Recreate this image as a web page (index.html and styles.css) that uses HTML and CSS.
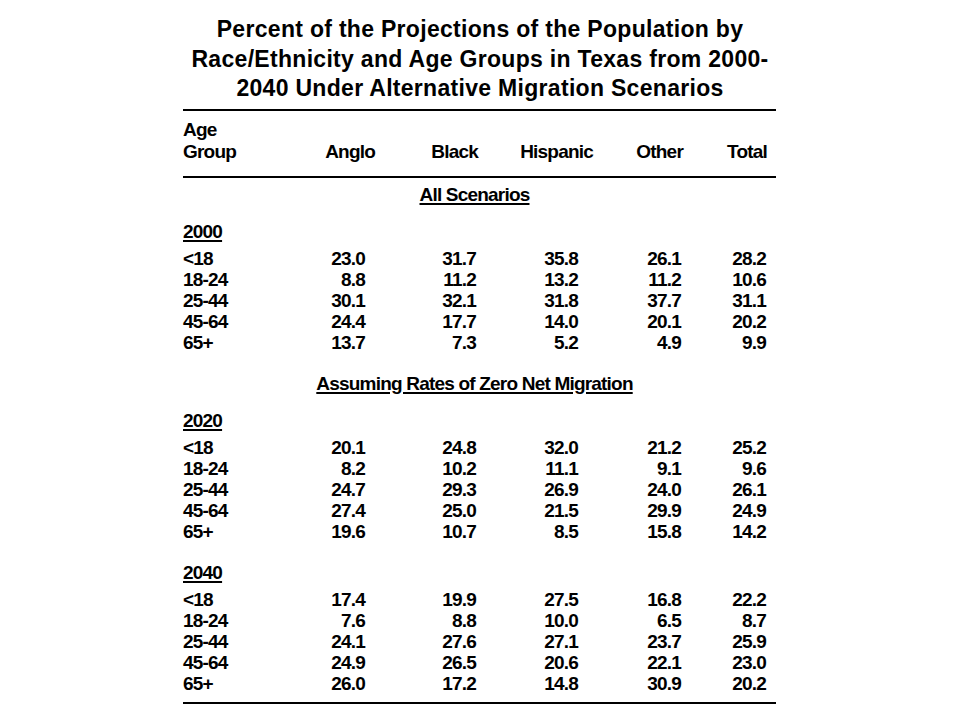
FILE: index.html
```html
<!DOCTYPE html>
<html>
<head>
<meta charset="utf-8">
<link rel="stylesheet" href="styles.css">
</head>
<body>
<div class="page">
  <h1 class="title">Percent of the Projections of the Population by<br>Race/Ethnicity and Age Groups in Texas from 2000-<br>2040 Under Alternative Migration Scenarios</h1>
  <div class="table">
    <div class="rule"></div>
    <div class="head">
      <div class="h-label">Age<br>Group</div>
      <div>Anglo</div>
      <div>Black</div>
      <div>Hispanic</div>
      <div>Other</div>
      <div>Total</div>
    </div>
    <div class="rule"></div>

    <div class="section first"><span>All Scenarios</span></div>
    <div class="year">2000</div>
    <div class="rows">
      <div class="row"><span>&lt;18</span><span>23.0</span><span>31.7</span><span>35.8</span><span>26.1</span><span>28.2</span></div>
      <div class="row"><span>18-24</span><span>8.8</span><span>11.2</span><span>13.2</span><span>11.2</span><span>10.6</span></div>
      <div class="row"><span>25-44</span><span>30.1</span><span>32.1</span><span>31.8</span><span>37.7</span><span>31.1</span></div>
      <div class="row"><span>45-64</span><span>24.4</span><span>17.7</span><span>14.0</span><span>20.1</span><span>20.2</span></div>
      <div class="row"><span>65+</span><span>13.7</span><span>7.3</span><span>5.2</span><span>4.9</span><span>9.9</span></div>
    </div>

    <div class="section"><span>Assuming Rates of Zero Net Migration</span></div>
    <div class="year">2020</div>
    <div class="rows">
      <div class="row"><span>&lt;18</span><span>20.1</span><span>24.8</span><span>32.0</span><span>21.2</span><span>25.2</span></div>
      <div class="row"><span>18-24</span><span>8.2</span><span>10.2</span><span>11.1</span><span>9.1</span><span>9.6</span></div>
      <div class="row"><span>25-44</span><span>24.7</span><span>29.3</span><span>26.9</span><span>24.0</span><span>26.1</span></div>
      <div class="row"><span>45-64</span><span>27.4</span><span>25.0</span><span>21.5</span><span>29.9</span><span>24.9</span></div>
      <div class="row"><span>65+</span><span>19.6</span><span>10.7</span><span>8.5</span><span>15.8</span><span>14.2</span></div>
    </div>

    <div class="year year-gap">2040</div>
    <div class="rows">
      <div class="row"><span>&lt;18</span><span>17.4</span><span>19.9</span><span>27.5</span><span>16.8</span><span>22.2</span></div>
      <div class="row"><span>18-24</span><span>7.6</span><span>8.8</span><span>10.0</span><span>6.5</span><span>8.7</span></div>
      <div class="row"><span>25-44</span><span>24.1</span><span>27.6</span><span>27.1</span><span>23.7</span><span>25.9</span></div>
      <div class="row"><span>45-64</span><span>24.9</span><span>26.5</span><span>20.6</span><span>22.1</span><span>23.0</span></div>
      <div class="row"><span>65+</span><span>26.0</span><span>17.2</span><span>14.8</span><span>30.9</span><span>20.2</span></div>
    </div>
    <div class="rule bottom"></div>
  </div>
</div>
</body>
</html>
```

FILE: styles.css
```css
html, body {
  margin: 0;
  padding: 0;
  background: #ffffff;
}

body {
  font-family: "Liberation Sans", Arial, sans-serif;
  color: #000000;
}

.page {
  width: 960px;
  height: 720px;
  padding-top: 15px;
  box-sizing: border-box;
}

.title {
  margin: 0;
  font-size: 23px;
  font-weight: bold;
  line-height: 29.5px;
  letter-spacing: 0.3px;
  text-align: center;
}

.table {
  margin-left: 183px;
  width: 593px;
  margin-top: 5px;
  font-weight: bold;
  font-size: 19px;
  letter-spacing: -0.8px;
}

.rule {
  height: 2px;
  background: #000000;
}

.head {
  display: grid;
  grid-template-columns: 121px 71px 103px 115px 90px 84px;
  align-items: end;
  line-height: 22px;
  padding: 8px 0 13px;
}

.head > div {
  text-align: right;
}

.head > .h-label {
  text-align: left;
}

.section {
  width: 583px;
  text-align: center;
  line-height: 21px;
  margin-top: 20px;
}

.section.first {
  margin-top: 6px;
}

.section span,
.year {
  text-decoration: underline;
  text-decoration-thickness: 2px;
  text-underline-offset: 2px;
}

.year {
  line-height: 21px;
  margin-top: 16px;
}

.year.year-gap {
  margin-top: 20px;
}

.rows {
  margin-top: 6px;
}

.row {
  display: grid;
  grid-template-columns: 121px 61px 111px 102px 103px 85px;
  line-height: 21px;
}

.row span {
  text-align: right;
}

.row span:first-child {
  text-align: left;
}

.rule.bottom {
  margin-top: 8px;
}
```
